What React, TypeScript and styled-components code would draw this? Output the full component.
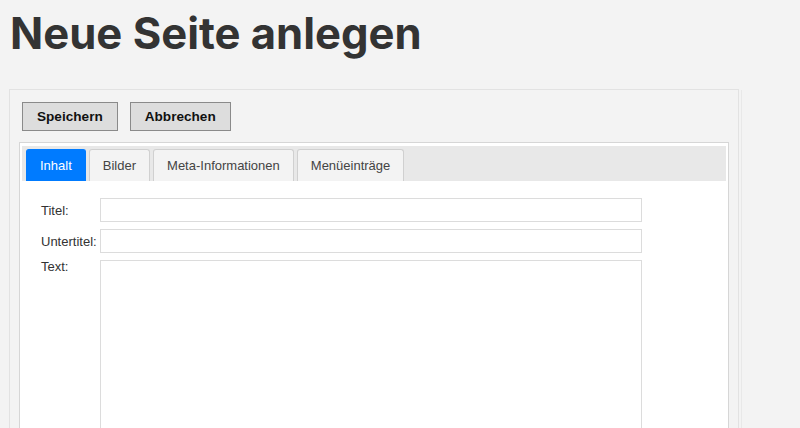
import React, { useState } from "react";
import styled, { createGlobalStyle } from "styled-components";

const GlobalStyle = createGlobalStyle`
  html, body {
    margin: 0;
    padding: 0;
    background: #f3f3f3;
    font-family: "Liberation Sans", Arial, sans-serif;
    color: #333;
  }
`;

const Page = styled.div`
  padding: 0 0 0 9px;
  width: 730px;
`;

const Title = styled.h1`
  margin: 0;
  padding: 9px 0 0 1px;
  height: 89px;
  box-sizing: border-box;
  font-family: Inter, "Noto Sans", sans-serif;
  font-weight: 700;
  font-size: 43.6px;
  line-height: 50px;
  color: #333;
`;

const Panel = styled.div`
  border: 1px solid #e2e2e2;
  background: #f3f3f3;
  padding: 12px 9px 0 9px;
  height: 400px;
  box-shadow: 3px 0 0 -1px #f3f3f3, 4px 0 0 -1px #e8e8e8;
`;

const Toolbar = styled.div`
  display: flex;
  gap: 12px;
  padding-left: 3px;
  margin-bottom: 11px;
`;

const ActionButton = styled.button`
  height: 29px;
  padding: 0 14px;
  background: #dddddd;
  border: 1px solid #8a8a8a;
  font-family: "Liberation Sans", Arial, sans-serif;
  font-weight: 700;
  font-size: 13.6px;
  color: #111;
  border-radius: 0;
`;

const TabBox = styled.div`
  border: 1px solid #d6d6d6;
  background: #fff;
  padding: 3px 2px 0 2px;
  height: 400px;
`;

const TabBar = styled.div`
  display: flex;
  gap: 3px;
  background: #e8e8e8;
  padding: 3px 4px 0 4px;
  height: 32px;
`;

const Tab = styled.button<{ $active?: boolean }>`
  height: 32px;
  padding: 0 13px;
  border: 1px solid ${(p) => (p.$active ? "#007bff" : "#d0d0d0")};
  border-bottom: none;
  border-radius: 3px 3px 0 0;
  background: ${(p) => (p.$active ? "#007bff" : "#f3f3f3")};
  color: ${(p) => (p.$active ? "#fff" : "#444")};
  font-family: "Liberation Sans", Arial, sans-serif;
  font-size: 13px;
  cursor: pointer;
`;

const Form = styled.div`
  padding: 17px 0 0 19px;
  display: flex;
  flex-direction: column;
  gap: 7px;
`;

const Row = styled.div<{ $top?: boolean }>`
  display: flex;
  align-items: ${(p) => (p.$top ? "flex-start" : "center")};
`;

const Label = styled.label<{ $top?: boolean }>`
  width: 59px;
  font-size: 13px;
  color: #333;
  margin-top: ${(p) => (p.$top ? "-1px" : "0")};
`;

const Input = styled.input`
  width: 542px;
  height: 24px;
  box-sizing: border-box;
  border: 1px solid #dcdcdc;
  background: #fff;
  margin: 0;
`;

const TextArea = styled.textarea`
  width: 542px;
  height: 200px;
  box-sizing: border-box;
  border: 1px solid #dcdcdc;
  resize: none;
  margin: 0;
`;

const tabs = ["Inhalt", "Bilder", "Meta-Informationen", "Menüeinträge"];

export default function App() {
  const [active, setActive] = useState(0);
  return (
    <>
      <GlobalStyle />
      <Page>
        <Title>Neue Seite anlegen</Title>
        <Panel>
          <Toolbar>
            <ActionButton>Speichern</ActionButton>
            <ActionButton>Abbrechen</ActionButton>
          </Toolbar>
          <TabBox>
            <TabBar>
              {tabs.map((t, i) => (
                <Tab key={t} $active={i === active} onClick={() => setActive(i)}>
                  {t}
                </Tab>
              ))}
            </TabBar>
            <Form>
              <Row>
                <Label>Titel:</Label>
                <Input />
              </Row>
              <Row>
                <Label>Untertitel:</Label>
                <Input />
              </Row>
              <Row $top>
                <Label $top>Text:</Label>
                <TextArea />
              </Row>
            </Form>
          </TabBox>
        </Panel>
      </Page>
    </>
  );
}
